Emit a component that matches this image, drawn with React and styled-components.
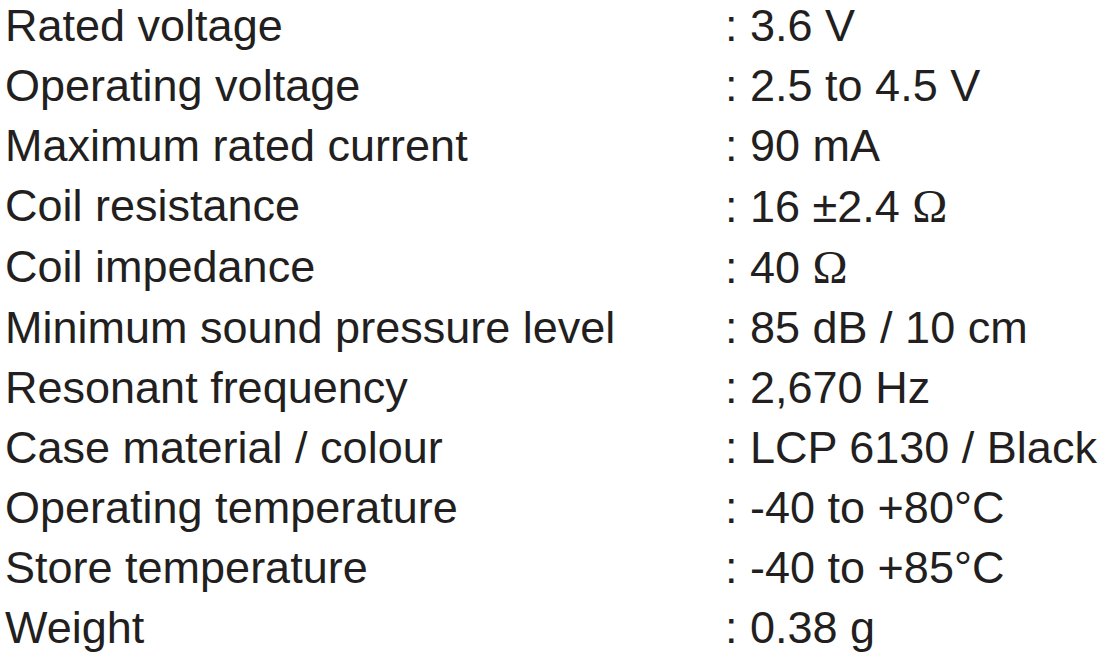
import React from 'react';
import styled, { createGlobalStyle } from 'styled-components';

const GlobalStyle = createGlobalStyle`
  html, body {
    margin: 0;
    padding: 0;
    background: #ffffff;
  }
  body {
    font-family: 'Liberation Sans', Arial, sans-serif;
    color: #231f20;
  }
`;

const SpecTable = styled.div`
  display: grid;
  grid-template-columns: 720px 1fr;
  margin-top: -4px;
  padding-left: 5px;
  font-size: 45px;
  line-height: 60px;
  white-space: nowrap;
`;

const Label = styled.div``;

const Value = styled.div`
  &::before {
    content: ': ';
  }
`;

const Ohm = styled.span`
  font-family: 'Liberation Serif', 'Times New Roman', serif;
  font-size: 1.05em;
`;

const specs = [
  ['Rated voltage', '3.6 V'],
  ['Operating voltage', '2.5 to 4.5 V'],
  ['Maximum rated current', '90 mA'],
  ['Coil resistance', <>16 ±2.4 <Ohm>Ω</Ohm></>],
  ['Coil impedance', <>40 <Ohm>Ω</Ohm></>],
  ['Minimum sound pressure level', '85 dB / 10 cm'],
  ['Resonant frequency', '2,670 Hz'],
  ['Case material / colour', 'LCP 6130 / Black'],
  ['Operating temperature', '-40 to +80°C'],
  ['Store temperature', '-40 to +85°C'],
  ['Weight', '0.38 g'],
];

export default function App() {
  return (
    <>
      <GlobalStyle />
      <SpecTable>
        {specs.map(([label, value]) => (
          <React.Fragment key={label}>
            <Label>{label}</Label>
            <Value>{value}</Value>
          </React.Fragment>
        ))}
      </SpecTable>
    </>
  );
}
